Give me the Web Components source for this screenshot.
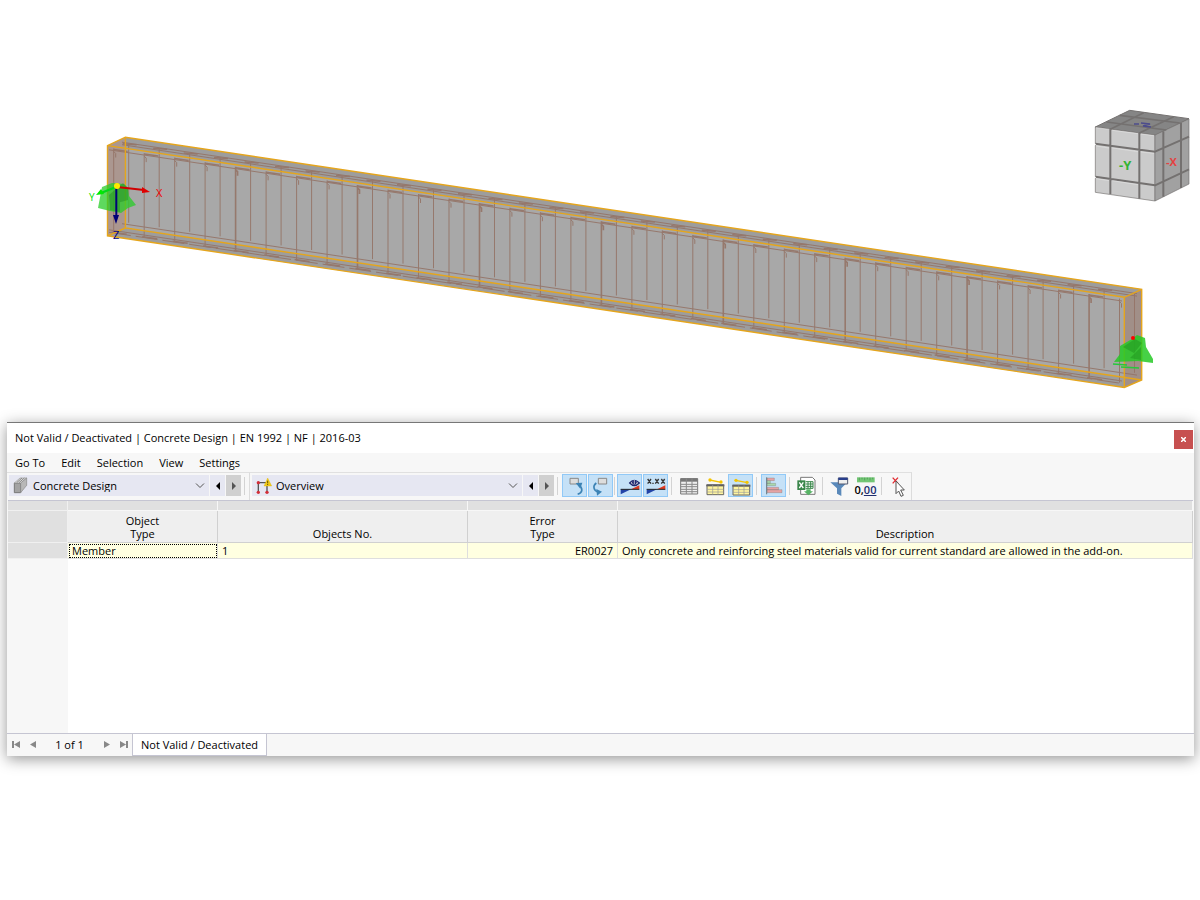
<!DOCTYPE html>
<html lang="en">
<head>
<meta charset="utf-8">
<meta name="viewport" content="width=device-width, initial-scale=1">
<title>Concrete Design</title>
<style>
html,body{margin:0;background:#fff;color:#000;font:11px/13px "Open Sans","Noto Sans",sans-serif}
</style>
</head>
<body>
<model-view></model-view>
<result-window>
  <window-title slot="title">Not Valid / Deactivated | Concrete Design | EN 1992 | NF | 2016-03</window-title>
  <menu-bar slot="menu"></menu-bar>
  <tool-bar slot="tools"></tool-bar>
  <result-table slot="content"></result-table>
  <sheet-tabs slot="footer"></sheet-tabs>
</result-window>
<script>
const define = (name, html, setup) => customElements.define(name, class extends HTMLElement {
  constructor() {
    super();
    const t = document.createElement('template');
    t.innerHTML = typeof html === 'function' ? html(this) : html;
    this.attachShadow({mode: 'open'}).append(t.content.cloneNode(true));
    if (setup) setup(this.shadowRoot);
  }
});

/* Beam with its stirrups and longitudinal bars */
function beam() {
  const k = 0.1492;
  const front = x => 145.6 + k * (x - 107.4);
  const back = x => 137.2 + k * (x - 125.4);
  const n = v => v.toFixed(1);
  let s = '';
  const line = (x1, x2, f, off, extra = '') =>
    `<path d="M${x1} ${n(f(x1) + off)}L${x2} ${n(f(x2) + off)}" ${extra}/>`;
  s += '<path fill="#9d9d9d" d="M107.5 145.6L125.4 137.2L1141.7 289.3V380L1124.3 387.5L107.5 235.8Z"/>';
  s += '<path fill="#a8a8a8" d="M125.4 148.3L1124.3 297.3V377.5L125.4 228Z"/>';
  s += '<path fill="#ab9790" d="M107.5 145.6L125.4 137.2V228L107.5 235.8Z"/>';
  s += '<path fill="#a18f88" d="M1124.3 297.3L1141.7 289.3V380L1124.3 387.5Z"/>';
  s += '<g stroke="#957467" stroke-width="1" fill="none" opacity=".9">';
  for (let i = 0; i < 34; i++) {
    const a = 113.7 + i * 30.48, b = 128.7 + i * 30.48;
    s += `<path stroke-width="${i % 4 === 0 && i ? 1.6 : 1}" d="M${n(a)} ${n(front(a) + 2)}V${n(front(a) + 86)}M${n(a)} ${n(front(a) + 5)}l2 2v4"/>`;
    s += `<path d="M${n(b)} ${n(back(b) + 6)}V${n(back(b) + 85)}"/>`;
    if (i < 33) s += `<path stroke-width="1.5" d="M${n(a)} ${n(front(a) + 3)}l14 2M${n(a - 2)} ${n(front(a - 2) + 86)}l15 2M${n(b - 6)} ${n(back(b - 6) + 7)}l14 1"/>`;
  }
  s += line(122, 1137, back, 5.5) + line(122, 1137, back, 8) + line(109, 1122, front, 4);
  s += line(122, 1137, back, 87) + line(109, 1122, front, 84) + line(109, 1122, front, 86.5, 'stroke-dasharray="22 5"');
  s += '</g>';
  s += '<g fill="none" stroke="#e5a51c" stroke-width="1.4">';
  s += '<path d="M107.5 145.6L125.4 137.2L1141.7 289.3V380L1124.3 387.5L107.5 235.8ZM107.5 145.6L1124.3 297.3L1141.7 289.3M1124.3 297.3V387.5M125.4 137.2V228L1141.7 380M107.5 235.8L125.4 228"/></g>';
  return s;
}

define('model-view', `
<style>
:host{display:block}
svg{display:block;width:100%;height:auto}
text{font-family:"Open Sans",sans-serif}
</style>
<svg viewBox="0 0 1200 422" role="img" aria-label="Reinforced beam model">
  ${beam()}
  <g>
    <path fill="#28cc28" fill-opacity=".75" d="M102 187l10 -4 12 1 4 4 1 8 7 9 -8 3 -7 5 -11 -2 -12 -3z"/>
    <path fill="#167c16" fill-opacity=".35" d="M109 195l14 -12 5 5v12l-18 5zM110 202l10-2v12l-10-2z"/>
    <path stroke="#00d818" stroke-width="2" d="M116 187L101 193"/><path fill="#00ea00" d="M96 195l5-6 3 5z"/>
    <path stroke="#d00000" stroke-width="2" d="M117 187L144 190"/><path fill="#e00000" d="M150 192l-8-5v6z"/>
    <path stroke="#000078" stroke-width="2" d="M116.300 188V216"/><path fill="#000078" d="M113 215h6l-3 9z"/>
    <circle cx="117" cy="186" r="3" fill="#ffea00"/>
    <text x="156" y="197" font-size="11" fill="#f00000">X</text>
    <text x="89" y="201" font-size="10" fill="#00e000">Y</text>
    <text x="113" y="239" font-size="11" fill="#000080">Z</text>
  </g>
  <g>
    <path fill="#26c926" fill-opacity=".85" d="M1120 346l12-7 5-4 8 3 1 9 7 12v4l-15-2-24 1 6-8z"/>
    <path fill="#148014" fill-opacity=".35" d="M1123 347l12-8 7 4-8 10zM1130 358l11-11v13z"/>
    <path stroke="#27c83a" stroke-width="1.500" d="M1113 364l14 1M1121 367l18 1"/>
    <circle cx="1133" cy="338" r="2" fill="red"/>
  </g>
  <g transform="translate(1080 100) scale(.33333)" stroke="#747170" stroke-width="6" stroke-linejoin="round">
    <path fill="#858585" stroke-width="3" d="M46 81L149 31L327 56L225 106Z"/>
    <path fill="#cbcbcb" stroke-width="2" d="M46 81L225 105V303L46 277Z"/>
    <path fill="#a1a1a1" stroke-width="2" d="M225 105L327 57V252L225 303Z"/>
    <path fill="none" stroke-width="5" d="M80 66L259 90M119 46L299 69M91 88L191 38M178 99L281 50"/>
    <path fill="none" stroke-width="6" d="M46 131L225 155L327 110M46 230L225 256L327 208M91 88V282M178 99V296M250 94V290M303 69V264"/>
    <path stroke="#e8e8e8" fill="none" stroke-width="1.500" d="M48 83L87 88M97 91L174 101M183 102L222 107M49 138L87 144M97 144L174 155M183 156L222 160M49 236L87 242M97 242L174 254"/>
    <path stroke="none" fill="#fff" d="M42 130l7 3-7 4zM42 229l7 3-7 4z"/>
  </g>
  <text x="1119" y="170" font-size="13" font-weight="700" fill="#32b432">-Y</text>
  <text x="1166" y="166" font-size="11" font-weight="700" fill="#e44141">-X</text>
  <g fill="none" stroke="#4c4c8c" stroke-width="1.500"><path d="M1134 124h5M1141 123l9 1-7 2 8 1"/></g>
</svg>`);

define('result-window', `
<style>
:host{display:block;margin:0 6px 40px 7px;background:#f7f7f7;border-top:1px solid #777;box-shadow:0 3px 14px rgba(0,0,0,.42)}
section{display:flex;flex-direction:column}
</style>
<section><slot name="title"></slot><slot name="menu"></slot><slot name="tools"></slot><slot name="content"></slot><slot name="footer"></slot></section>`);

define('window-title', `
<style>
:host{display:flex;justify-content:space-between;height:30px;background:#fff;padding:0 1px 0 8px;line-height:30px}
h1{margin:0;font:inherit}
button{width:19px;height:19px;margin-top:7px;padding:0;border:0;background:#c75050;display:grid;place-items:center}
</style>
<h1><slot></slot></h1>
<button aria-label="Close"><svg width="5" height="5" viewBox="0 0 5 5"><path d="M0 0L5 5M5 0L0 5" stroke="#fff" stroke-width="1.500"/></svg></button>`);

define('menu-bar', `
<style>
:host{display:block}
nav{display:flex;gap:16px;padding:0 8px;height:19px;line-height:19px}
a{color:inherit;text-decoration:none}
</style>
<nav><a href="#goto">Go To</a><a href="#edit">Edit</a><a href="#selection">Selection</a><a href="#view">View</a><a href="#settings">Settings</a></nav>`);

const table = (y) => `<path fill="#fff5a0" d="M9 ${y}h50v30h-50z"/><path fill="#555" d="M7 ${y - 2}h54v6h-54z"/><path fill="none" stroke="#666" stroke-width="3" d="M9 ${y}h50v29h-50z"/><path fill="none" stroke="#999" stroke-width="2" d="M9 ${y + 13}h50M9 ${y + 21}h50M26 ${y}v29M42 ${y}v29"/><path stroke="#f4c400" stroke-width="4" d="M17 ${y - 15}L52 ${y - 8}"/><circle cx="18" cy="${y - 15}" r="5" fill="#f4c400"/><circle cx="51" cy="${y - 9}" r="5" fill="#f4c400"/>`;
const wedge = '<path fill="#2244a8" d="M5 43h31L5 58z"/><path fill="#df3a22" d="M36 43L61 31v12z"/><path stroke="#222" stroke-width="3" d="M5 43h56"/>';
const icons = {
  concrete: '<path fill="#a3a3a3" stroke="#777" stroke-width="3" d="M10 24h19v29H10z"/><path fill="#ddd" stroke="#999" stroke-width="2" d="M10 24L27 9h20L29 24z"/><path fill="#b8b8b8" stroke="#888" stroke-width="2" d="M29 24L47 9v22L29 53z"/><path stroke="#888" stroke-width="3" d="M17 23l16-14M24 23l16-14"/>',
  overview: '<path fill="none" stroke="#555" stroke-width="4" d="M13 52V23h26v29"/><path fill="#f2ca17" stroke="#d9b000" d="M41 9L53 33H30z"/><path stroke="#665500" stroke-width="3" d="M41 17v8M41 27v3"/><g fill="#d22d37"><circle cx="13" cy="23" r="5"/><circle cx="13" cy="52" r="5"/><circle cx="39" cy="52" r="5"/></g>',
  pick: '<path fill="#ddd" stroke="#888" stroke-width="3" d="M18 10h25v17H18z"/><path fill="none" stroke="#3c83b5" stroke-width="5" d="M41 58C56 53 58 41 44 28"/><path fill="#3c83b5" d="M35 24l20-1-6 18z"/>',
  place: '<path fill="#ddd" stroke="#888" stroke-width="3" d="M25 10h25v17H25z"/><path fill="none" stroke="#3c83b5" stroke-width="5" d="M19 24C7 33 11 47 24 51"/><path fill="#3c83b5" d="M19 42l17 8-15 12z"/>',
  eye: wedge + '<path d="M32 24Q45 8 61 24Q46 39 32 24Z" fill="#ddd" stroke="#20266f" stroke-width="4"/><circle cx="46" cy="22" r="7" fill="#20266f"/><path stroke="#fff" stroke-width="2" d="M46 15v12"/>',
  values: wedge + '<path stroke="#333" stroke-width="4" d="M8 12l10 14M18 12L8 26M31 12l10 14M41 12L31 26M49 12l10 14M59 12L49 26"/><path fill="#333" d="M22 23h4v4h-4z"/>',
  grid: '<path fill="#eee" stroke="#777" stroke-width="3" d="M8 11h51v46H8z"/><path fill="#777" d="M8 10h51v10H8z"/><path fill="none" stroke="#888" stroke-width="3" d="M8 28h51M8 35h51M8 43h51M8 50h51M25 10v47M42 10v47"/>',
  yellow: table(30),
  bound: table(31),
  bars: '<path fill="#e6a3a4" stroke="#777" d="M12 9h22v8H12zM12 37h35v7H12zM12 44h45v9H12z"/><path fill="#a8d9ac" stroke="#777" d="M12 17h10v8H12zM12 25h26v7H12z"/><path stroke="#667980" stroke-width="3" d="M11 7v51"/>',
  excel: '<path fill="#fff" stroke="#777" stroke-width="3" d="M14 7h35l8 8v43H14z"/><path fill="#39864a" d="M4 16h24v29H4z"/><path stroke="#fff" stroke-width="4" d="M10 22l12 17M22 22L10 39"/><path fill="none" stroke="#39864a" stroke-width="3" d="M29 20h22v20H29M29 27h22M29 34h22M36 20v20M44 20v20"/><path fill="#57b365" d="M31 43h13v6h7L37 61 24 49h7z"/>',
  filter: '<path fill="#5a89ba" d="M4 22h51L37 40v23l-13-7V40z"/><path fill="#eee" stroke="#555b70" stroke-width="3" d="M28 9h28v18H28z"/><path fill="#283e8c" d="M28 8h28v7H28z"/>',
  decimal: '<path fill="#73c675" d="M6 7h53v15H6z"/><path stroke="#438f4c" stroke-width="2" d="M13 8v8M21 8v5M29 8v8M37 8v5M45 8v8M53 8v5"/>',
  cursor: '<path stroke="#e1292f" stroke-width="4" d="M14 8l16 17M30 8L14 25"/><path fill="#fff" stroke="#555" stroke-width="3" d="M24 18l25 27H38l8 16-7 3-7-16-8 8z"/>'
};
define('tool-icon', el => `
<style>:host{display:block;width:22px;height:22px;position:relative}svg{display:block}span{position:absolute;left:0;right:0;bottom:0;text-align:center;font:600 11px/14px "Open Sans",sans-serif}u{color:#202e70}</style>
<svg width="22" height="22" viewBox="0 0 66 66" aria-hidden="true">${icons[el.getAttribute('name')] || ''}</svg>${el.getAttribute('name') === 'decimal' ? '<span>0,<u>00</u></span>' : ''}`);

define('combo-box', el => `
<style>
:host{display:flex;gap:1px;height:21px}
label{flex:1;display:flex;position:relative;background:#e6e7f2;padding-left:2px}
select{flex:1;min-width:0;appearance:none;border:0;background:transparent;font:inherit;color:inherit;padding:0;height:21px}
label svg{position:absolute;right:4px;top:8px}
button{width:15px;padding:0;border:0;background:#e6e7f2;display:grid;place-items:center}
button[disabled]{background:#d0d0d0}
</style>
<label><tool-icon name="${el.getAttribute('icon')}"></tool-icon><select aria-label="${el.getAttribute('value')}"><option>${el.getAttribute('value')}</option></select>
<svg width="10" height="6" viewBox="0 0 10 6"><path d="M1 .5L5 4.500L9 .5" fill="none" stroke="#555"/></svg></label>
<button aria-label="Previous"><svg width="4" height="8" viewBox="0 0 4 8"><path d="M4 0v8L0 4z"/></svg></button>
<button aria-label="Next" disabled><svg width="4" height="8" viewBox="0 0 4 8"><path d="M0 0v8l4-4z" fill="#555"/></svg></button>`);

const btn = (name, on) => `<button aria-label="${name}"${on ? ' class="on" aria-pressed="true"' : ''}><tool-icon name="${name}"></tool-icon></button>`;
define('tool-bar', `
<style>
:host{display:flex;height:28px}
.group{display:flex;align-items:center;border-top:1px solid #e0e0e0;border-right:1px solid #dcdcdc;padding:0 0 2px 2px;box-sizing:border-box}
.buttons{display:flex;gap:1px;align-items:center}
.one{width:232px}.two{width:302px}
i{width:1px;height:18px;background:#d3d3d3;margin:0 3px 0 2px}
.group>i{margin:0 4px 0 3px}
.group>i.tight{margin:0 2px 0 1px}
button{width:25px;height:23px;padding:0;border:1px solid transparent;background:none;display:grid;place-items:center;color:inherit}
button.on{background:#c5e1f7;border-color:#91c9f7}
</style>
<div class="group"><combo-box class="one" icon="concrete" value="Concrete Design"></combo-box><i></i></div>
<div class="group"><combo-box class="two" icon="overview" value="Overview"></combo-box><i></i>
<div class="buttons">${btn('pick', 1)}${btn('place', 1)}</div><i class="tight"></i>
<div class="buttons">${btn('eye', 1)}${btn('values', 1)}<i></i>${btn('grid')}${btn('yellow')}${btn('bound', 1)}<i></i>${btn('bars', 1)}<i></i>${btn('excel')}<i></i>${btn('filter')}${btn('decimal')}<i></i>${btn('cursor')}</div></div>`);

define('result-table', `
<style>
:host{display:block;box-sizing:border-box;min-height:233px;margin:0 1px;border-top:1px solid #c5c5d2;background:linear-gradient(90deg,#f7f7f7 60px,#fff 60px)}
table{width:100%;border-collapse:separate;border-spacing:0;table-layout:fixed}
th,td{box-sizing:border-box;padding:0;font-weight:400;border-right:1px solid #d0d0d0;border-bottom:1px solid #d0d0d0}
.strip td{height:10px;background:#e0e0e0;border-color:#f7f7f7;line-height:0}
.head th{height:32px;background:#efefef;vertical-align:bottom;padding-bottom:2px}
tr>:first-child{background:#e0e0e0!important;border-color:#f0f0f0}
.row td{height:16px;line-height:14px;background:#ffffe1;border-color:#dedede;padding:0 4px;white-space:nowrap}
.row td.focus{outline:1px dotted #000;outline-offset:-2px}
.num{text-align:right}
</style>
<table>
<colgroup><col style="width:60px"><col style="width:150px"><col style="width:250px"><col style="width:150px"><col></colgroup>
<thead><tr class="strip"><td></td><td></td><td></td><td></td><td></td></tr>
<tr class="head"><th></th><th scope="col">Object<br>Type</th><th scope="col">Objects No.</th><th scope="col">Error<br>Type</th><th scope="col">Description</th></tr></thead>
<tbody><tr class="row"><th></th><td class="focus">Member</td><td>1</td><td class="num">ER0027</td><td>Only concrete and reinforcing steel materials valid for current standard are allowed in the add-on.</td></tr></tbody>
</table>`);

const arrow = (label, d) => `<button aria-label="${label}"><svg width="8" height="7" viewBox="0 0 8 7"><path d="${d}" fill="#888"/></svg></button>`;
define('sheet-tabs', `
<style>
:host{display:flex;height:23px;line-height:21px}
.pager{width:125px;box-sizing:border-box;border-top:1px solid #c5c5d2;display:grid;grid-template-columns:17px 17px 1fr 17px 17px;text-align:center}
button{border:0;padding:0 0 1px;background:none;display:grid;place-items:center}
a{color:inherit;text-decoration:none;background:#fff;border:1px solid #c5c5d2;padding:0 8px}
.rest{flex:1;border-top:1px solid #c5c5d2}
</style>
<div class="pager">${arrow('First', 'M0 0h2v7H0zM8 0v7L2 3.500z')}${arrow('Previous', 'M7 0v7L1 3.500z')}<span>1 of 1</span>${arrow('Next', 'M1 0v7l6-3.500z')}${arrow('Last', 'M0 0v7l6-3.500zM6 0h2v7H6z')}</div>
<a href="#sheet">Not Valid / Deactivated</a><div class="rest"></div>`);
</script>
</body>
</html>
